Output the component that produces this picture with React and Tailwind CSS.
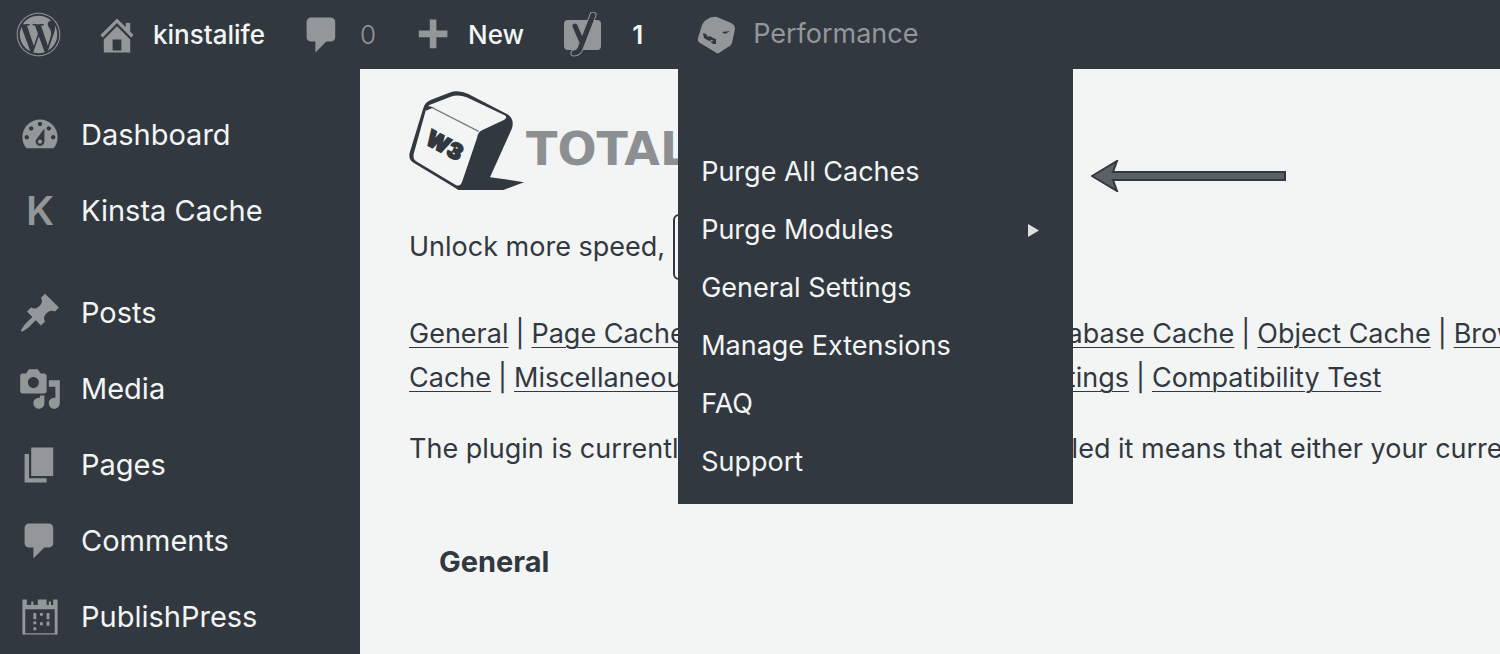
import React from "react";
import { FaWordpress } from "react-icons/fa";

const icons = {
  dashboard:
    "M3.76 16h12.48c1.1-1.37 1.76-3.11 1.76-5 0-4.42-3.58-8-8-8s-8 3.58-8 8c0 1.89.66 3.63 1.76 5zM10 4c.55 0 1 .45 1 1s-.45 1-1 1-1-.45-1-1 .45-1 1-1zM6 6c.55 0 1 .45 1 1s-.45 1-1 1-1-.45-1-1 .45-1 1-1zm8 0c.55 0 1 .45 1 1s-.45 1-1 1-1-.45-1-1 .45-1 1-1zm-5.37 5.55L12 7v6c0 1.1-.9 2-2 2s-2-.9-2-2c0-.57.24-1.08.63-1.45zM4 10c.55 0 1 .45 1 1s-.45 1-1 1-1-.45-1-1 .45-1 1-1zm12 0c.55 0 1 .45 1 1s-.45 1-1 1-1-.45-1-1 .45-1 1-1zm-5 3c0-.55-.45-1-1-1s-1 .45-1 1 .45 1 1 1 1-.45 1-1z",
  post:
    "M10.44 3.02l1.82-1.82 6.36 6.35-1.83 1.82c-1.05-.68-2.48-.57-3.41.36l-.75.75c-.92.93-1.04 2.35-.35 3.41l-1.83 1.82-2.41-2.41-2.8 2.79c-.42.42-3.38 2.71-3.8 2.29s1.86-3.39 2.28-3.81l2.79-2.79L4.1 9.36l1.83-1.82c1.05.69 2.48.57 3.4-.36l.75-.75c.93-.92 1.05-2.35.36-3.41z",
  media:
    "M13 11V4c0-.55-.45-1-1-1h-1.67L9 1H5L3.67 3H2c-.55 0-1 .45-1 1v7c0 .55.45 1 1 1h10c.55 0 1-.45 1-1zM7 4.5c1.38 0 2.5 1.12 2.5 2.5S8.38 9.5 7 9.5 4.5 8.38 4.5 7 5.62 4.5 7 4.5zM14 6h5v10.5c0 1.38-1.12 2.5-2.5 2.5S14 17.88 14 16.5s1.12-2.5 2.5-2.5c.17 0 .34.02.5.05V9h-3V6zm-4 8.05V13h2v3.5c0 1.38-1.12 2.5-2.5 2.5S7 17.88 7 16.5 8.12 14 9.5 14c.17 0 .34.02.5.05z",
  page: "M6 15V2h10v13H6zm-1 1h8v2H3V5h2v11z",
  comment:
    "M5 2h9c1.1 0 2 .9 2 2v7c0 1.1-.9 2-2 2h-2l-5 5v-5H5c-1.1 0-2-.9-2-2V4c0-1.1.9-2 2-2z",
  home:
    "M16 8.5l1.53 1.53-1.06 1.06L10 4.6l-6.47 6.49-1.06-1.06L10 2.5l4 4v-2h2v4zm-6-2.46l6 5.99V18H4v-5.97zM12 17v-5H8v5h4z",
  plus: "M17 8v3h-5v5H9v-5H4V8h5V3h3v5h5z",
  calendar:
    "M2 2h2v2.500h2V3h1v1.500h2V2h4v2.500h1V3h1v1.500h1V2h2v16H2zM3.300 6.500v10.900h13.400V6.500zM7 8.200h1.300V11H7zM10 8.200h1.300V9.400H10zM13 8.200h1.300V11H13zM7 12h1.300v1.300H7zM10 12.400h1.300v1.300H10zM13 12h1.300v2H13zM7 14.700h1.300V16H7z",
};

function Icon({ name }) {
  return (
    <svg viewBox="0 0 20 20" className="size-11 shrink-0 fill-[#94979a]" aria-hidden="true">
      <path fillRule="evenodd" d={icons[name]} />
    </svg>
  );
}

function YoastIcon() {
  return (
    <svg viewBox="0 0 38 46" className="h-[46px] w-[38px] shrink-0" fill="none" aria-hidden="true">
      <rect x="0" y="8" width="37" height="30" rx="4" fill="#94979a" />
      <path d="M29 3L17 34Q15 41 10 41" stroke="#94979a" strokeWidth="7" strokeLinecap="round" />
      <path d="M29 3L17 34Q15 41 10 41" stroke="#32383f" strokeWidth="5" strokeLinecap="round" />
      <path d="M11 14L17 28" stroke="#32383f" strokeWidth="5" strokeLinecap="round" />
    </svg>
  );
}

function CubeIcon() {
  return (
    <svg viewBox="0 0 38 38" className="h-[38px] w-[38px] shrink-0" aria-hidden="true">
      <path
        d="M9 4Q14 0 20 1L34 7Q38 9 38 13L35 27Q34 30 31 31L22 37Q20 38 18 36L3 27Q0 25 1 22L5 9Q6 6 9 4z"
        fill="#94979a"
      />
      <path d="M6 17l3 1 2 3 2-1 3 2 3 1 0 5-3 0-3-3-3-1-3-2z" fill="#32383f" />
      <path d="M25 16l8-1-5 3z" fill="#32383f" />
      <path d="M13 24l3 0-1 2z" fill="#94979a" />
    </svg>
  );
}

function Logo() {
  return (
    <div className="flex h-[101px] items-center">
      <svg viewBox="57 30 351 303" className="h-[101px] w-[117px] shrink-0" role="img" aria-label="W3 cube">
        <path
          d="M205 330H340L402 307L340 297L300 292L366 145Q374 115 352 103L235 42Q205 28 178 38L122 60Q104 68 100 84L59 218Q54 240 73 250L190 320Z"
          fill="#32383f"
        />
        <path
          d="M120 74L182 50Q205 42 230 52L344 106Q354 112 343 119L276 151Q263 157 261 174L216 306Q210 322 196 314L82 246Q67 238 71 222L107 92Q110 78 120 74Z"
          fill="#f3f5f4"
        />
        <path d="M104 76L132 82L108 92Z" fill="#32383f" />
        <path d="M125 82L266 154" stroke="#7b7f84" strokeWidth="4" />
        <text
          x="102"
          y="190"
          transform="rotate(28 102 190)"
          fontFamily="Inter, sans-serif"
          fontWeight="900"
          fontSize="66"
          fill="#32383f"
          stroke="#32383f"
          strokeWidth="5"
        >
          W3
        </text>
      </svg>
      <span className="mt-4 font-['DejaVu_Sans',sans-serif] text-[46px] leading-none font-bold whitespace-nowrap text-[#8c9093]">
        TOTAL CACHE
      </span>
    </div>
  );
}

const sideTop = [
  ["Dashboard", "dashboard"],
  ["Kinsta Cache", null],
];
const sideBottom = [
  ["Posts", "post"],
  ["Media", "media"],
  ["Pages", "page"],
  ["Comments", "comment"],
  ["PublishPress", "calendar"],
];

function SideList({ items }) {
  return (
    <ul>
      {items.map(([label, icon]) => (
        <li key={label}>
          <a href="#" className="flex h-[76px] items-center gap-[19px] pl-[18px] text-[29px] text-[#f3f5f4]">
            {icon ? (
              <Icon name={icon} />
            ) : (
              <span className="w-11 text-center text-[40px] leading-none font-semibold text-[#94979a]" aria-hidden="true">
                K
              </span>
            )}
            {label}
          </a>
        </li>
      ))}
    </ul>
  );
}

const menu = [
  "Purge All Caches",
  "Purge Modules",
  "General Settings",
  "Manage Extensions",
  "FAQ",
  "Support",
];

function LinkRow({ items }) {
  return (
    <div className="whitespace-nowrap">
      {items.map((item, i) => (
        <React.Fragment key={item}>
          {i > 0 && <span className="mx-[7px]">|</span>}
          <a href="#" className="underline decoration-1 underline-offset-4">
            {item}
          </a>
        </React.Fragment>
      ))}
    </div>
  );
}

export default function App() {
  return (
    <div className="flex min-h-screen flex-col overflow-hidden bg-[#f3f5f4] font-['Inter',sans-serif] text-[#32383f]">
      <header className="relative z-10 flex h-[69px] items-center bg-[#32383f] pl-4 text-[26px] text-[#f3f5f4]">
        <a href="#" aria-label="WordPress">
          <FaWordpress className="size-[45px] text-[#94979a]" />
        </a>
        <a href="#" className="ml-[34px] flex items-center gap-[14px] font-medium">
          <Icon name="home" />
          kinstalife
        </a>
        <a href="#" className="ml-[35px] flex items-center gap-4 font-light text-[#94979a]">
          <Icon name="comment" />0
        </a>
        <a href="#" className="ml-[34px] flex items-center gap-[14px] font-medium">
          <Icon name="plus" />
          New
        </a>
        <a href="#" className="ml-10 flex items-center gap-[30px] font-semibold">
          <YoastIcon />1
        </a>
        <div className="relative ml-[35px] flex h-full items-center pl-[19px]">
          <button type="button" className="flex items-center gap-[18px] text-[27px] text-[#94979a]">
            <CubeIcon />
            Performance
          </button>
          <ul className="absolute top-full left-0 w-[395px] bg-[#32383f] pt-[74px] pb-[13px] text-[27px]">
            {menu.map((item) => (
              <li key={item}>
                <a href="#" className="flex h-[58px] items-center justify-between pr-[34px] pl-[23px] whitespace-nowrap">
                  {item}
                  {item === "Purge Modules" && (
                    <svg viewBox="0 0 11 13" className="h-[13px] w-[11px] fill-[#dfe1e1]" aria-hidden="true">
                      <path d="M0 0L11 6.500L0 13z" />
                    </svg>
                  )}
                </a>
              </li>
            ))}
          </ul>
          <svg viewBox="0 0 195 32" className="absolute top-[160px] left-[413px] h-8 w-[195px]" aria-hidden="true">
            <path
              d="M1 16L26 1L22 12H194V20H22L26 31z"
              fill="#5b6066"
              stroke="#32383f"
              strokeWidth="2"
            />
          </svg>
        </div>
      </header>
      <div className="flex flex-1">
        <nav className="flex w-[360px] shrink-0 flex-col gap-[26px] bg-[#32383f] pt-7">
          <SideList items={sideTop} />
          <SideList items={sideBottom} />
        </nav>
        <main className="min-w-0 flex-1 overflow-hidden pt-[21px] pl-[49px] text-[27px] leading-[44px]">
          <Logo />
          <div className="mt-[23px] flex items-center gap-2 whitespace-nowrap">
            Unlock more speed,
            <button type="button" className="h-[66px] w-[220px] rounded-md border-2 border-[#32383f]">
              learn more
            </button>
          </div>
          <div className="mt-8">
            <LinkRow
              items={[
                "General",
                "Page Cache",
                "Minify",
                "Opcode Cache",
                "Database Cache",
                "Object Cache",
                "Browser",
              ]}
            />
            <LinkRow
              items={["Cache", "Miscellaneous", "Debug", "Import / Export Settings", "Compatibility Test"]}
            />
          </div>
          <p className="mt-[27px] whitespace-nowrap">
            The plugin is currently <strong className="font-bold">enabled</strong>. If an option is disabled it
            means that either your current
          </p>
          <h2 className="mt-[69px] pl-[30px] text-[29px] font-bold">General</h2>
        </main>
      </div>
    </div>
  );
}
